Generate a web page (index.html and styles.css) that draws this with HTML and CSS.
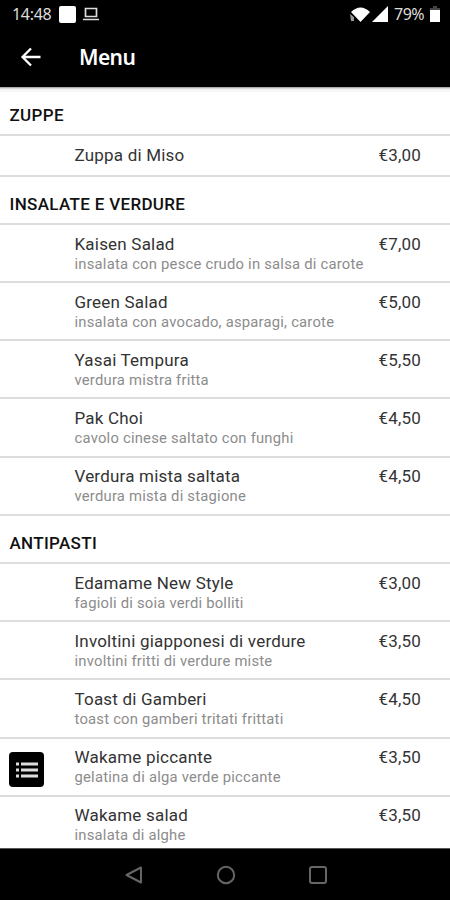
FILE: index.html
```
<!DOCTYPE html>
<html lang="it">
<head>
    <meta charset="utf-8">
    <title>Menu</title>
    <link rel="stylesheet" href="styles.css">
</head>
<body>
    <div class="status">
        <span class="time">14:48</span>
        <span class="square"></span>
        <svg class="laptop" width="18" height="14" viewBox="0 0 18 14"><path d="M3.500 1.500h11v8h-11zM1 12.500h16" fill="none" stroke="#ddd" stroke-width="1.700"/></svg>
        <svg class="wifi" width="21" height="17" viewBox="0 0 21 17"><path d="M1 6Q10.500 -3 20 6L10.500 16Z" fill="#fff"/><path d="M0 8l4 3v4H1z" fill="#999"/><path d="M1 7l6 7" stroke="#000"/></svg>
        <svg class="signal" width="16" height="16" viewBox="0 0 16 16"><path d="M16 0v16H0z" fill="#fff"/></svg>
        <span class="percent">79%</span>
        <svg class="battery" width="10" height="16" viewBox="0 0 10 16"><path d="M3 0h4v2h3v2H0V2h3z" fill="#444"/><path d="M0 4h10v12H0z" fill="#fff"/></svg>
    </div>
    <div class="bar">
        <svg width="22" height="20" viewBox="0 0 22 20"><path d="M20.500 10H2M11 1.500L2.500 10l8.500 8.500" fill="none" stroke="#fff" stroke-width="2.300"/></svg>
        <h1>Menu</h1>
    </div>
    <div class="list">
        <h2>ZUPPE</h2>
        <div class="row single"><div class="dish"><b>Zuppa di Miso</b></div><span class="price">€3,00</span></div>

        <h2>INSALATE E VERDURE</h2>
        <div class="row"><div class="dish"><b>Kaisen Salad</b><p>insalata con pesce crudo in salsa di carote</p></div><span class="price">€7,00</span></div>
        <div class="row"><div class="dish"><b>Green Salad</b><p>insalata con avocado, asparagi, carote</p></div><span class="price">€5,00</span></div>
        <div class="row"><div class="dish"><b>Yasai Tempura</b><p>verdura mistra fritta</p></div><span class="price">€5,50</span></div>
        <div class="row"><div class="dish"><b>Pak Choi</b><p>cavolo cinese saltato con funghi</p></div><span class="price">€4,50</span></div>
        <div class="row"><div class="dish"><b>Verdura mista saltata</b><p>verdura mista di stagione</p></div><span class="price">€4,50</span></div>

        <h2>ANTIPASTI</h2>
        <div class="row"><div class="dish"><b>Edamame New Style</b><p>fagioli di soia verdi bolliti</p></div><span class="price">€3,00</span></div>
        <div class="row"><div class="dish"><b>Involtini giapponesi di verdure</b><p>involtini fritti di verdure miste</p></div><span class="price">€3,50</span></div>
        <div class="row"><div class="dish"><b>Toast di Gamberi</b><p>toast con gamberi tritati frittati</p></div><span class="price">€4,50</span></div>
        <div class="row"><div class="dish"><b>Wakame piccante</b><p>gelatina di alga verde piccante</p></div><span class="price">€3,50</span></div>
        <div class="row"><div class="dish"><b>Wakame salad</b><p>insalata di alghe</p></div><span class="price">€3,50</span></div>
    </div>
    <div class="fab">
        <svg width="22" height="18" viewBox="0 0 22 18"><path d="M0 3h3M5 3h17M0 9h3M5 9h17M0 15h3M5 15h17" stroke="#ddd" stroke-width="2.800"/></svg>
    </div>
    <div class="nav">
        <svg width="20" height="20" viewBox="0 0 20 20"><path d="M17 2.500v15L2.500 10z"/></svg>
        <svg width="20" height="20" viewBox="0 0 20 20"><circle cx="10" cy="10" r="8.200"/></svg>
        <svg width="20" height="20" viewBox="0 0 20 20"><rect x="2" y="2" width="16" height="16" rx="2"/></svg>
    </div>
</body>
</html>
```
FILE: styles.css
```
* {
    box-sizing: border-box;
}
body {
    margin: 0;
    height: 900px;
    display: flex;
    flex-direction: column;
    position: relative;
    overflow: hidden;
    background: #fff;
    font-family: Roboto, sans-serif;
}
.status {
    height: 28px;
    flex: none;
    display: flex;
    align-items: center;
    padding: 0 10px 0 12px;
    background: #000;
    color: #ddd;
    font-family: "Noto Sans", sans-serif;
    font-size: 16px;
    line-height: 26px;
}
.time {
    width: 47px;
    padding-bottom: 1px;
    letter-spacing: -0.3px;
}
.square {
    width: 17px;
    height: 17px;
    border-radius: 2px;
    background: #fff;
}
.laptop {
    margin-left: 6px;
}
.wifi {
    margin-left: auto;
}
.signal {
    margin: 0 6px 0 1px;
}
.percent {
    width: 36px;
    padding-bottom: 1px;
    letter-spacing: -0.5px;
}
.bar {
    height: 59px;
    flex: none;
    display: flex;
    align-items: center;
    padding: 0 20px 1px;
    background: #000;
    color: #fff;
}
.bar h1 {
    margin: 0 0 0 37px;
    font-family: "Noto Sans", sans-serif;
    font-size: 21px;
    font-weight: 600;
    letter-spacing: -0.6px;
}
.list {
    flex: 1;
    min-height: 0;
    overflow: hidden;
    background: linear-gradient(#999, #eee 2px, #fff 6px);
}
h2 {
    height: 48.6px;
    margin: 0;
    padding: 3.5px 9.5px 0;
    border-bottom: 2px solid #ddd;
    font-size: 17px;
    font-weight: 500;
    line-height: 48px;
    letter-spacing: 0.33px;
    color: #111;
}
.row {
    height: 58.1px;
    display: flex;
    justify-content: space-between;
    padding: 8.8px 29px 0 74.5px;
    border-bottom: 2px solid #ddd;
}
.single {
    height: 41px;
    padding-top: 9.8px;
}
.dish b, .price {
    display: block;
    font-size: 17px;
    font-weight: 400;
    line-height: 20px;
    letter-spacing: 0.2px;
    color: #333;
}
.dish p {
    margin: 0.7px 0 0;
    font-size: 14.8px;
    line-height: 19px;
    letter-spacing: 0.22px;
    color: #8c8c8c;
}
.fab {
    position: absolute;
    left: 9px;
    top: 752px;
    width: 35px;
    height: 35px;
    display: flex;
    align-items: center;
    justify-content: center;
    border-radius: 4px;
    background: #000;
}
.nav {
    height: 52px;
    flex: none;
    display: flex;
    align-items: center;
    justify-content: center;
    gap: 72px;
    padding-left: 1px;
    border-top: 1px solid #555;
    background: #000;
}
.nav svg {
    fill: none;
    stroke: #666;
    stroke-width: 2;
    stroke-linejoin: round;
}
```
